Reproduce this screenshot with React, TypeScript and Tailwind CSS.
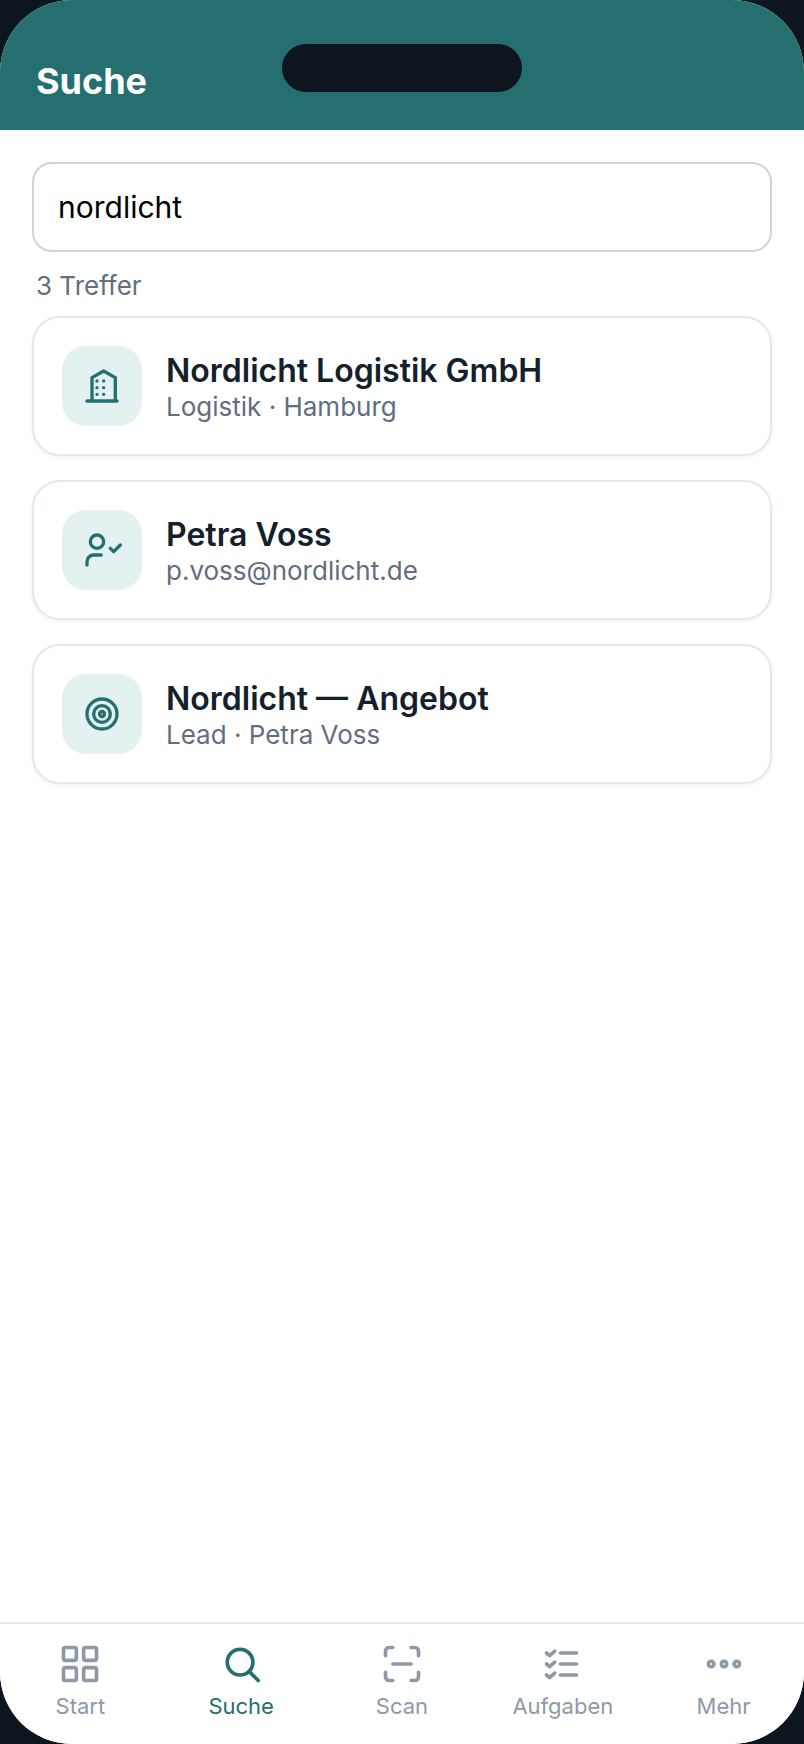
import { useState } from 'react';
import type { ReactNode } from 'react';
import clsx from 'clsx';

type IconProps = {
    className?: string;
    children: ReactNode;
};

const Icon = ({ className, children }: IconProps) => (
    <svg
        viewBox="0 0 24 24"
        fill="none"
        stroke="currentColor"
        strokeWidth="2"
        strokeLinecap="round"
        strokeLinejoin="round"
        aria-hidden="true"
        className={className}
    >
        {children}
    </svg>
);

const results = [
    {
        title: 'Nordlicht Logistik GmbH',
        subtitle: 'Logistik · Hamburg',
        icon: (
            <>
                <path d="M3 21h18M6 21V7l7-4 7 4v14" />
                <path d="M9 9h.01M13 9h.01M9 13h.01M13 13h.01M9 17h.01M13 17h.01" />
            </>
        ),
    },
    {
        title: 'Petra Voss',
        subtitle: 'p.voss@nordlicht.de',
        icon: (
            <>
                <circle cx="9" cy="7" r="4" />
                <path d="M3 21v-2a4 4 0 0 1 4-4h4.5M17 11l2 2 4-4" />
            </>
        ),
    },
    {
        title: 'Nordlicht — Angebot',
        subtitle: 'Lead · Petra Voss',
        icon: (
            <>
                <circle cx="12" cy="12" r="9" />
                <circle cx="12" cy="12" r="5" />
                <circle cx="12" cy="12" r="1.5" />
            </>
        ),
    },
];

const tabs = [
    {
        label: 'Start',
        icon: (
            <>
                <rect x="3" y="3" width="7" height="7" rx="1" />
                <rect x="14" y="3" width="7" height="7" rx="1" />
                <rect x="3" y="14" width="7" height="7" rx="1" />
                <rect x="14" y="14" width="7" height="7" rx="1" />
            </>
        ),
    },
    {
        label: 'Suche',
        icon: (
            <>
                <circle cx="11.5" cy="11" r="7" />
                <path d="M21.4 21l-5-5" />
            </>
        ),
    },
    {
        label: 'Scan',
        icon: (
            <path d="M3 7.5V5a2 2 0 0 1 2-2h2M17 3h2a2 2 0 0 1 2 2v2.5M21 16.5V19a2 2 0 0 1-2 2h-2M7 21H5a2 2 0 0 1-2-2v-2.5M7 12h10" />
        ),
    },
    {
        label: 'Aufgaben',
        icon: (
            <>
                <path d="M10.6 6h8.8M10.6 12h8.8M10.6 18h8.8" />
                <path d="M3 6l1.7 1.4L7.5 5M3 12l1.7 1.4L7.5 11M3 18l1.7 1.4L7.5 17" />
            </>
        ),
    },
    {
        label: 'Mehr',
        icon: (
            <>
                <circle cx="5" cy="12" r="1.5" />
                <circle cx="12" cy="12" r="1.5" />
                <circle cx="19" cy="12" r="1.5" />
            </>
        ),
    },
];

const App = () => {
    const [query, setQuery] = useState('nordlicht');

    return (
        <div className="bg-[#0d161e] font-['Inter',sans-serif]">
            <div className="relative flex min-h-screen flex-col overflow-hidden rounded-[72px] bg-white">
                <div className="absolute top-11 left-1/2 h-12 w-60 -translate-x-1/2 rounded-full bg-[#0d161e]" />

                <header className="bg-[#256f70] px-9 pt-[59px] pb-[27px] text-white">
                    <h1 className="text-4xl leading-11 font-bold">Suche</h1>
                </header>

                <main className="flex-1 px-8 pt-8">
                    <input
                        type="text"
                        aria-label="Suche"
                        value={query}
                        onChange={(e) => setQuery(e.target.value)}
                        className="block h-[90px] w-full rounded-[20px] border-2 border-[#cbd5de] bg-white px-6 text-3xl text-black outline-none"
                    />
                    <p className="px-1 pt-[18px] pb-3.5 text-[26px] leading-8 text-[#5f6e80]">
                        3 Treffer
                    </p>
                    <ul className="space-y-6">
                        {results.map((item) => (
                            <li key={item.title}>
                                <button
                                    type="button"
                                    className="flex w-full items-center gap-6 rounded-[28px] border-2 border-[#e2e8ec] bg-white p-7 text-left shadow-[0_2px_4px_rgba(15,23,42,0.05)]"
                                >
                                    <span className="flex size-20 shrink-0 items-center justify-center rounded-3xl bg-[#e3f2f1] text-[#256f70]">
                                        <Icon className="size-10">{item.icon}</Icon>
                                    </span>
                                    <span className="pt-0.5">
                                        <span className="block text-[32px] leading-10 font-semibold text-[#14202b]">
                                            {item.title}
                                        </span>
                                        <span className="block text-[26px] leading-8 text-[#5f6e80]">
                                            {item.subtitle}
                                        </span>
                                    </span>
                                </button>
                            </li>
                        ))}
                    </ul>
                </main>

                <nav className="grid grid-cols-5 border-t-2 border-[#e2e8ec] bg-white pt-[18px] pb-6">
                    {tabs.map((tab) => (
                        <button
                            key={tab.label}
                            type="button"
                            className={clsx(
                                'flex flex-col items-center gap-1.5 text-[22px] leading-7',
                                tab.label === 'Suche'
                                    ? 'text-[#256f70]'
                                    : 'text-[#8c9aa8]',
                            )}
                        >
                            <Icon className="size-11">{tab.icon}</Icon>
                            {tab.label}
                        </button>
                    ))}
                </nav>
            </div>
        </div>
    );
};

export default App;
